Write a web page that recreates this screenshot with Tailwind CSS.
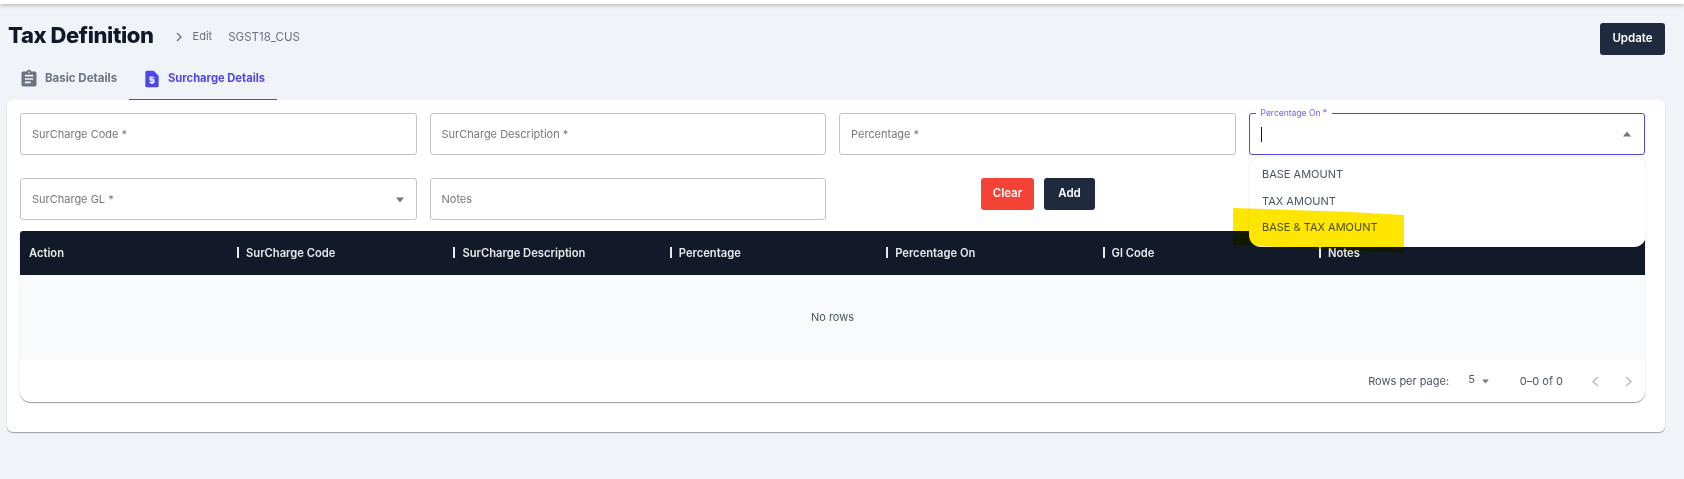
<!DOCTYPE html>
<html lang="en">
<head>
    <meta charset="UTF-8">
    <title>Tax Definition</title>
    <script src="https://cdn.jsdelivr.net/npm/@tailwindcss/browser@4"></script>
</head>
<body class="bg-[#f0f3f8] font-['Inter',sans-serif] text-[#111827] overflow-hidden">
    <div class="relative h-[479px] w-[1684px]">
        <!-- Top bar -->
        <div class="h-[4px] bg-white shadow-[0_1px_4px_rgba(0,0,0,0.3)]"></div>

        <!-- Page header -->
        <div class="flex h-[52px] items-start pl-[8px] pr-[19px]">
            <h1 class="mt-[17px] text-[22px] leading-[28px] font-extrabold tracking-[-0.4px] text-[#111827]">Tax Definition</h1>
            <svg class="mt-[28px] ml-[20px] h-[10px] w-[10px] text-[#6b7280]" viewBox="0 0 10 10" fill="none" stroke="currentColor" stroke-width="1.4"><path d="M3 1l4 4-4 4"/></svg>
            <span class="mt-[25px] ml-[9px] text-[11px] leading-[14px] text-[#6b7280]">Edit</span>
            <span class="mt-[26px] ml-[16px] text-[11.5px] leading-[14px] text-[#6b7280]">SGST18_CUS</span>
            <button class="mt-[19px] ml-auto h-[32px] w-[65px] rounded-[3px] bg-[#1f2a3f] text-[11.5px] font-semibold text-white">Update</button>
        </div>

        <!-- Tabs -->
        <div class="flex h-[44px] items-stretch pl-[19px]">
            <div class="flex w-[110px] items-center pt-[2px]">
                <svg class="h-[20px] w-[20px] text-[#6b7280]" viewBox="0 0 24 24" fill="currentColor"><path d="M19 3h-4.18C14.4 1.84 13.3 1 12 1s-2.4.84-2.82 2H5c-1.1 0-2 .9-2 2v14c0 1.1.9 2 2 2h14c1.1 0 2-.9 2-2V5c0-1.1-.9-2-2-2zm-7 0c.55 0 1 .45 1 1s-.45 1-1 1-1-.45-1-1 .45-1 1-1zm2 14H7v-2h7v2zm3-4H7v-2h10v2zm0-4H7V7h10v2z"/></svg>
                <span class="ml-[6px] text-[11.5px] font-bold text-[#6b7280]">Basic Details</span>
            </div>
            <div class="flex w-[148px] items-center border-b border-[#4f46e5] pt-[2px] pl-[13px]">
                <svg class="h-[20px] w-[20px] text-[#4f46e5]" viewBox="0 0 24 24" fill="currentColor"><path d="M14 2H6c-1.1 0-2 .9-2 2v16c0 1.1.9 2 2 2h12c1.1 0 2-.9 2-2V8l-6-6zm1 9h-4v1h3c.55 0 1 .45 1 1v3c0 .55-.45 1-1 1h-1v1h-2v-1H9v-2h4v-1h-3c-.55 0-1-.45-1-1v-3c0-.55.45-1 1-1h1V9h2v1h2v1z"/></svg>
                <span class="ml-[6px] text-[11.2px] font-bold text-[#4f46e5]">Surcharge Details</span>
            </div>
        </div>

        <!-- Card -->
        <div class="ml-[7px] h-[332px] w-[1658px] rounded-[6px] bg-white pt-[13px] pr-[20px] pl-[13px] shadow-[0_1px_1px_rgba(0,0,0,0.35)]">
            <div class="grid grid-cols-4 gap-x-[13px] gap-y-[23px]">
                <div class="flex h-[42px] items-center rounded-[3px] border border-[#c4c4c4] pl-[11px] text-[11px] text-[#777]">SurCharge Code *</div>
                <div class="flex h-[42px] items-center rounded-[3px] border border-[#c4c4c4] pl-[11px] text-[11px] text-[#777]">SurCharge Description *</div>
                <div class="flex h-[42px] items-center rounded-[3px] border border-[#c4c4c4] pl-[11px] text-[11px] text-[#777]">Percentage *</div>
                <div class="relative flex h-[42px] items-center rounded-[3px] border border-[#4f46e5] pl-[11px]">
                    <span class="absolute -top-[7px] left-[6px] bg-white px-[5px] text-[8.5px] leading-[12px] text-[#6d66ee]">Percentage On *</span>
                    <span class="h-[15px] w-px bg-[#111827]"></span>
                    <svg class="absolute top-[17px] right-[12px] h-[6px] w-[10px] text-[#777]" viewBox="0 0 10 6" fill="currentColor"><path d="M1 5.5L5 .5l4 5z"/></svg>
                </div>
                <div class="relative flex h-[42px] items-center rounded-[3px] border border-[#c4c4c4] pl-[11px] text-[11px] text-[#777]">
                    SurCharge GL *
                    <svg class="absolute top-[18px] right-[11px] h-[6px] w-[10px] text-[#777]" viewBox="0 0 10 6" fill="currentColor"><path d="M1 .5L5 5.5l4-5z"/></svg>
                </div>
                <div class="flex h-[42px] items-center rounded-[3px] border border-[#c4c4c4] pl-[11px] text-[11px] text-[#777]">Notes</div>
                <div class="col-span-2 flex gap-[10px] pl-[142px]">
                    <button class="h-[32px] w-[53px] rounded-[3px] bg-[#f44336] text-[11.5px] font-semibold text-white">Clear</button>
                    <button class="h-[32px] w-[51px] rounded-[3px] bg-[#1f2a3f] text-[11.5px] font-semibold text-white">Add</button>
                </div>
            </div>

            <!-- Table -->
            <div class="mt-[11px] h-[171px] rounded-b-[10px] bg-white shadow-[0_1px_1px_rgba(0,0,0,0.4)]">
                <div class="grid h-[44px] grid-cols-[208px_repeat(6,216.4px)] items-center rounded-tl-[3px] bg-[#121a2a] pl-[9px] text-[11.2px] font-semibold text-[#e8e8e8]">
                    <div>Action</div>
                    <div class="flex items-center"><span class="mr-[7px] h-[11px] w-[2px] bg-[#e8e8e8]"></span>SurCharge Code</div>
                    <div class="flex items-center"><span class="mr-[7px] h-[11px] w-[2px] bg-[#e8e8e8]"></span>SurCharge Description</div>
                    <div class="flex items-center"><span class="mr-[7px] h-[11px] w-[2px] bg-[#e8e8e8]"></span>Percentage</div>
                    <div class="flex items-center"><span class="mr-[7px] h-[11px] w-[2px] bg-[#e8e8e8]"></span>Percentage On</div>
                    <div class="flex items-center"><span class="mr-[7px] h-[11px] w-[2px] bg-[#e8e8e8]"></span>Gl Code</div>
                    <div class="flex items-center"><span class="mr-[7px] h-[11px] w-[2px] bg-[#e8e8e8]"></span>Notes</div>
                </div>
                <div class="flex h-[85px] items-center justify-center bg-[#f9fafc] text-[11px] text-[#4b5563]">No rows</div>
                <div class="flex h-[42px] items-center justify-end text-[11px] text-[#4b5563]">
                    <span>Rows per page:</span>
                    <span class="mb-[3px] ml-[19px]">5</span>
                    <svg class="ml-[6px] h-[5px] w-[9px] text-[#777]" viewBox="0 0 10 6" fill="currentColor"><path d="M1 .5L5 5.5l4-5z"/></svg>
                    <span class="ml-[30px]">0–0 of 0</span>
                    <svg class="ml-[28px] h-[11px] w-[9px] text-[#bdbdbd]" viewBox="0 0 9 11" fill="none" stroke="currentColor" stroke-width="1.5"><path d="M7 1L2 5.5 7 10"/></svg>
                    <svg class="mr-[12px] ml-[24px] h-[11px] w-[9px] text-[#bdbdbd]" viewBox="0 0 9 11" fill="none" stroke="currentColor" stroke-width="1.5"><path d="M2 1l5 4.5L2 10"/></svg>
                </div>
            </div>
        </div>

        <!-- Open dropdown menu -->
        <div class="absolute top-[157px] left-[1249px] z-10 h-[90px] w-[397px] rounded-[12px] bg-white pt-[4px] text-[11px] text-[#4b5563] shadow-[0_0_2px_rgba(0,0,0,0.15)]">
            <div class="flex h-[26.5px] items-center pl-[13px]">BASE AMOUNT</div>
            <div class="flex h-[26.5px] items-center pl-[13px]">TAX AMOUNT</div>
            <div class="flex h-[26.5px] items-center pl-[13px]">BASE &amp; TAX AMOUNT</div>
        </div>

        <!-- Yellow marker stroke over the screenshot -->
        <svg class="absolute top-0 left-0 z-20 mix-blend-multiply" width="1684" height="479" viewBox="0 0 1684 479"><path d="M1233 208L1290 210L1350 212L1404 215V253L1340 250L1233 245Z" fill="#ffe600"/></svg>
    </div>
</body>
</html>
